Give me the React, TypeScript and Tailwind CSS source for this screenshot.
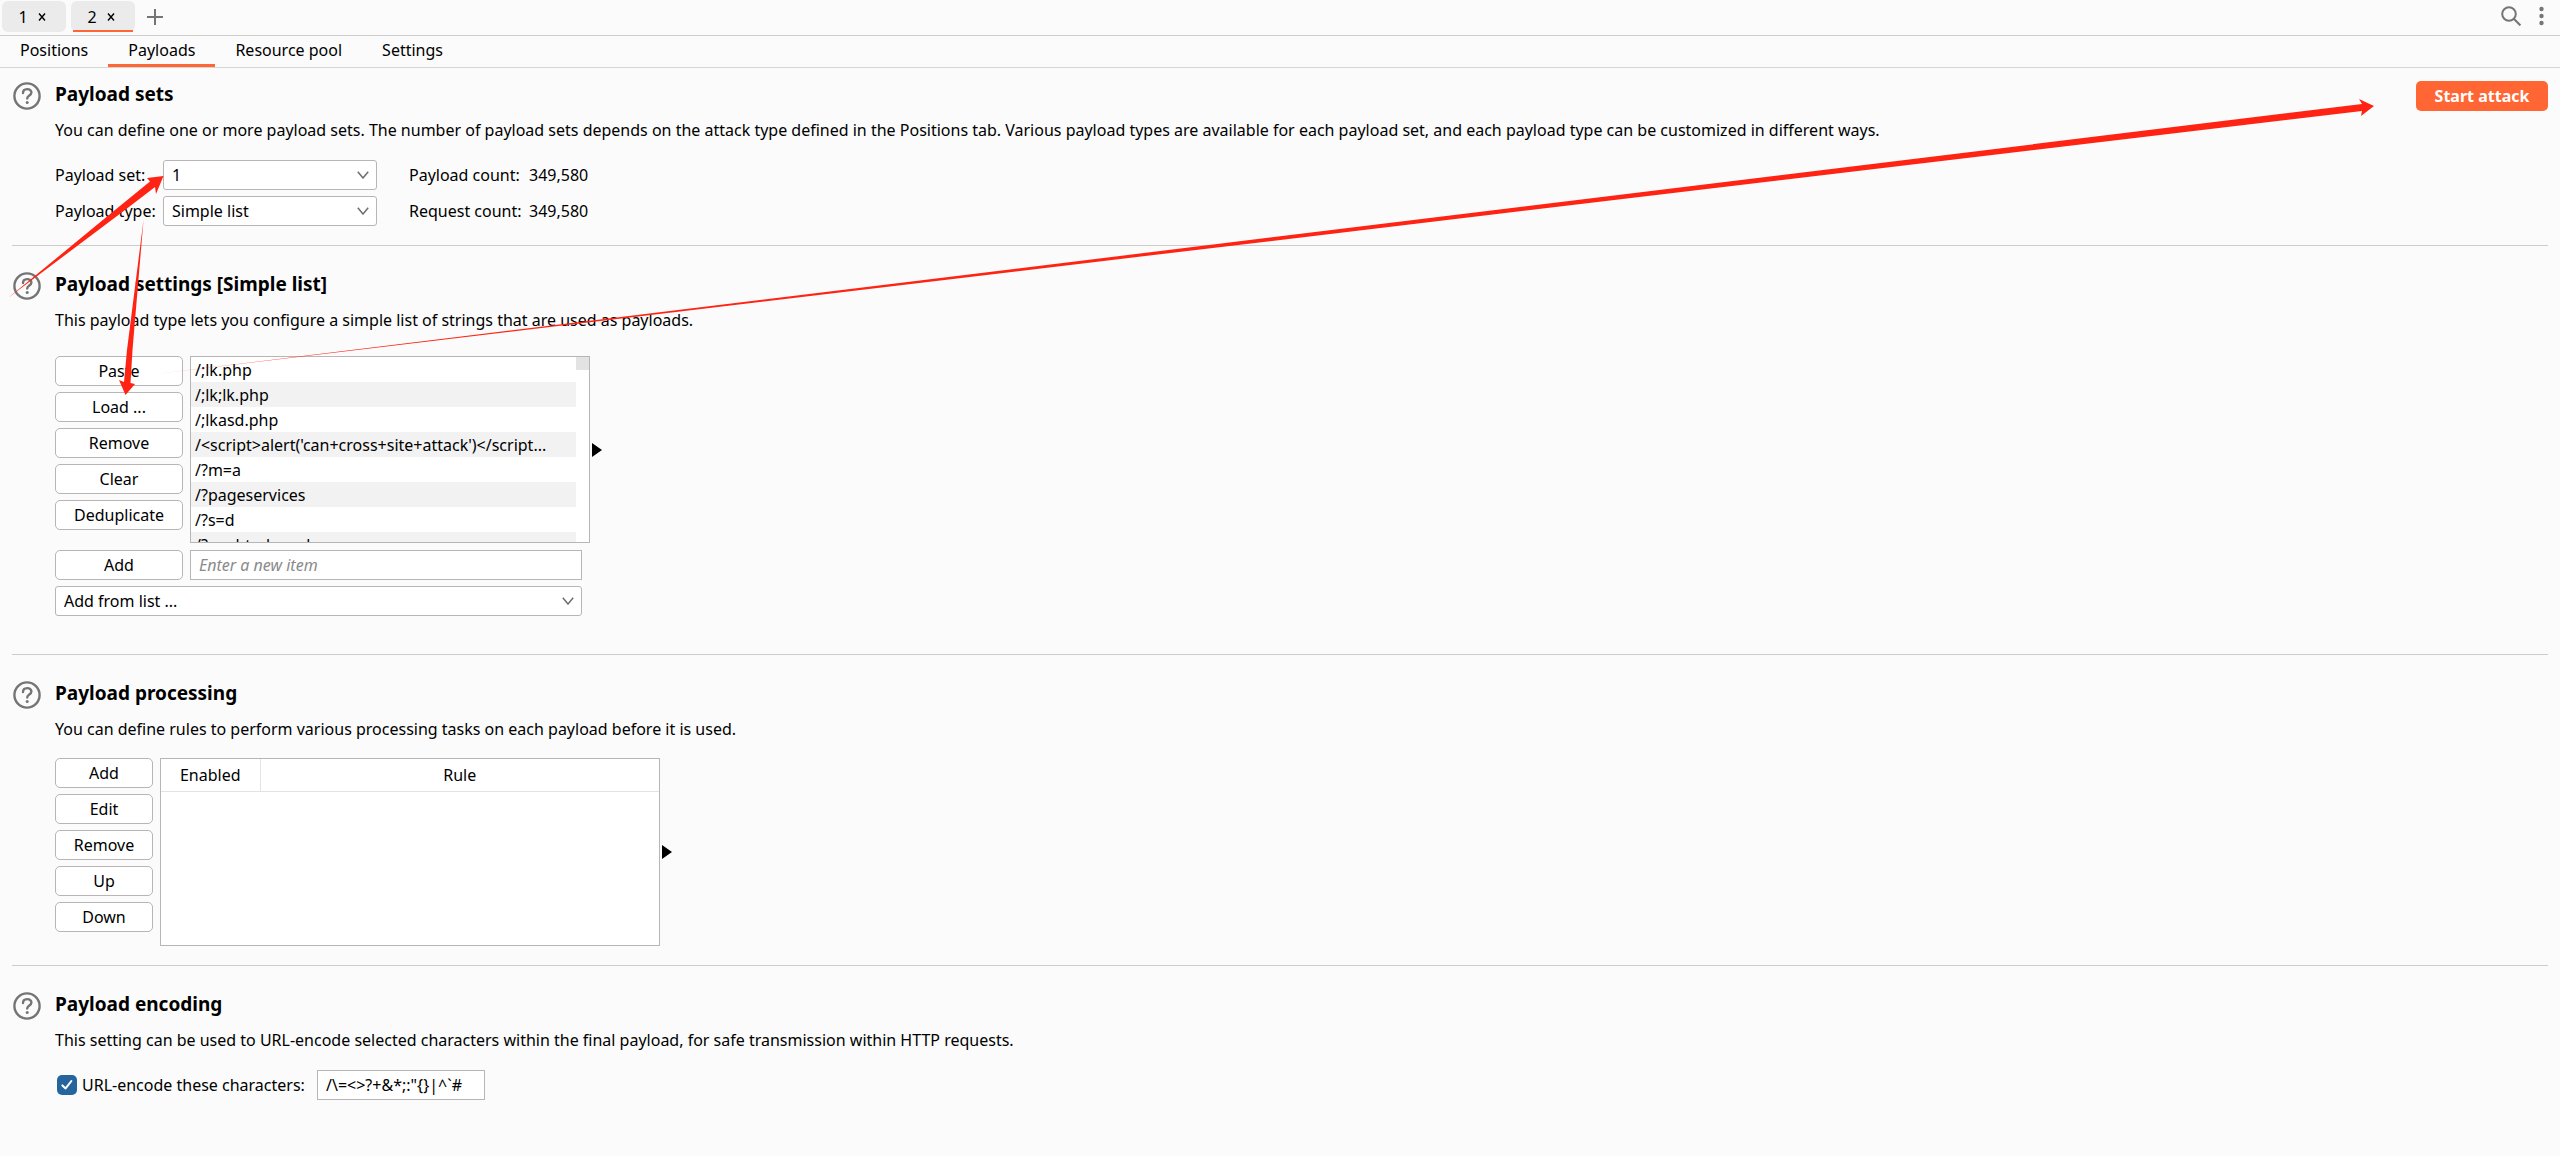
import type { ReactNode } from "react";

const tabs = ["Positions", "Payloads", "Resource pool", "Settings"];

const items = [
  "/;lk.php",
  "/;lk;lk.php",
  "/;lkasd.php",
  "/<script>alert('can+cross+site+attack')</script...",
  "/?m=a",
  "/?pageservices",
  "/?s=d",
  "/?wp-html-rend",
];

const HelpIcon = () => (
  <svg viewBox="0 0 28 28" className="mt-px h-7 w-7 shrink-0" fill="none" stroke="#757575" strokeWidth="2.4">
    <circle cx="14" cy="14" r="12.6" />
    <path d="M10 11c0-5 8.4-5 8.4-.6 0 3-4.200 3-4.200 6" strokeLinecap="round" />
    <circle cx="14.200" cy="20.400" r="1.500" fill="#757575" stroke="none" />
  </svg>
);

const Select = ({ id, label, value }: { id: string; label?: string; value: string }) => (
  <div className="relative w-full">
    <select
      id={id}
      aria-label={label}
      className="block h-[30px] w-full appearance-none rounded-[3px] border border-[#b9b5b5] bg-white px-2 leading-6"
    >
      <option>{value}</option>
    </select>
    <svg
      viewBox="0 0 12 8"
      className="pointer-events-none absolute top-[11px] right-2 h-2 w-3"
      fill="none"
      stroke="#6e6e6e"
      strokeWidth="1.500"
    >
      <path d="M.8.8 6 7 11.200.8" />
    </svg>
  </div>
);

const Button = ({ children }: { children: ReactNode }) => (
  <button className="h-[30px] w-full rounded-[5px] border border-[#b9b5b5] bg-white leading-6">{children}</button>
);

const Expand = () => (
  <button aria-label="Expand" className="self-center">
    <svg viewBox="0 0 10 14" className="h-3.5 w-2.5" fill="#000">
      <path d="M0 0 10 7 0 14z" />
    </svg>
  </button>
);

const Section = ({
  title,
  text,
  action,
  children,
}: {
  title: string;
  text: string;
  action?: ReactNode;
  children: ReactNode;
}) => (
  <section className="flex gap-3.5 pl-px">
    <HelpIcon />
    <div className="flex-1">
      <div className="flex h-[30px] items-start justify-between">
        <h2 className="text-[19px] leading-[26px] font-bold">{title}</h2>
        {action}
      </div>
      <p className="mt-1.5 leading-[26px]">{text}</p>
      {children}
    </div>
  </section>
);

// red marker arrows drawn over the panel
const Arrows = () => (
  <svg
    viewBox="0 0 2560 1156"
    className="pointer-events-none absolute top-0 left-0 h-[1156px] w-[2560px] max-w-none"
    fill="#ff2314"
  >
    <path d="M8 298 115 210 150 181.500 147 178 163.500 176 156 194 155 187 125 210z" />
    <path d="M143.500 220 127 350 124 382 119 380 125.500 395 135 384 130.500 383 132.500 350z" />
    <path d="M155 374 2362 104 2359 99 2374 106 2361 116 2362 111z" />
  </svg>
);

const App = () => {
  return (
    <div className="relative min-h-screen overflow-hidden bg-[#fbfbfb] font-['Noto_Sans',sans-serif] text-base text-black">
      <header className="flex h-9 items-start justify-between border-b border-[#ccc] pt-px pr-4 pl-0.5">
        <div className="flex items-center gap-[5px]">
          <button className="flex h-[31px] w-16 items-center justify-center gap-2.5 rounded-md bg-[#ebebeb] pr-1">
            1
            <svg viewBox="0 0 8 8" className="h-2 w-2" stroke="#000" strokeWidth="1.400">
              <path d="M1 .5 7 7.500M7 .5 1 7.500" />
            </svg>
          </button>
          <button className="relative flex h-[31px] w-16 items-center justify-center gap-2.5 rounded-md bg-[#ebebeb] pr-1">
            2
            <svg viewBox="0 0 8 8" className="h-2 w-2" stroke="#000" strokeWidth="1.400">
              <path d="M1 .5 7 7.500M7 .5 1 7.500" />
            </svg>
            <span className="absolute inset-x-0.5 bottom-0 h-0.5 bg-[#ff6633]" />
          </button>
          <button aria-label="New tab" className="ml-[7px]">
            <svg viewBox="0 0 16 16" className="h-4 w-4" stroke="#757575" strokeWidth="2">
              <path d="M8 0V16M0 8H16" />
            </svg>
          </button>
        </div>
        <div className="flex items-center gap-[18px] pt-[5px]">
          <button aria-label="Search">
            <svg viewBox="0 0 20 20" className="h-5 w-5" fill="none" stroke="#757575" strokeWidth="2">
              <circle cx="8" cy="8" r="6.800" />
              <path d="M12.800 12.800 19.400 19.400" />
            </svg>
          </button>
          <button aria-label="Menu">
            <svg viewBox="0 0 5 20" className="h-5 w-[5px]" fill="#757575">
              <circle cx="2.500" cy="3" r="2.200" />
              <circle cx="2.500" cy="10" r="2.200" />
              <circle cx="2.500" cy="17" r="2.200" />
            </svg>
          </button>
        </div>
      </header>
      <nav className="flex h-8 border-b border-[#d5d5d5]">
        {tabs.map((tab) => (
          <button
            key={tab}
            className={
              tab === "Payloads"
                ? "border-b-3 border-[#ff6633] px-5"
                : "border-b-3 border-transparent px-5"
            }
          >
            {tab}
          </button>
        ))}
      </nav>

      <main className="flex flex-col px-3">
        <div className="pt-[13px] pb-[19px]">
          <Section
            title="Payload sets"
            text="You can define one or more payload sets. The number of payload sets depends on the attack type defined in the Positions tab. Various payload types are available for each payload set, and each payload type can be customized in different ways."
            action={
              <button className="h-[30px] w-[132px] rounded-[5px] bg-[#ff6633] text-base leading-6 font-bold text-white">
                Start attack
              </button>
            }
          >
            <div className="mt-[17px] grid grid-cols-[108px_214px_120px_auto] items-center justify-start gap-y-1.5">
              <label htmlFor="payload-set">Payload set:</label>
              <Select id="payload-set" value="1" />
              <span className="pl-8 whitespace-nowrap">Payload count:</span>
              <span className="pl-8">349,580</span>
              <label htmlFor="payload-type">Payload type:</label>
              <Select id="payload-type" value="Simple list" />
              <span className="pl-8 whitespace-nowrap">Request count:</span>
              <span className="pl-8">349,580</span>
            </div>
          </Section>
        </div>

        <div className="border-t border-[#ccc] pt-[25px] pb-[38px]">
          <Section
            title="Payload settings [Simple list]"
            text="This payload type lets you configure a simple list of strings that are used as payloads."
          >
            <div className="mt-[23px] flex">
              <div className="mr-[7px] flex w-32 flex-col gap-1.5">
                <Button>Paste</Button>
                <Button>Load ...</Button>
                <Button>Remove</Button>
                <Button>Clear</Button>
                <Button>Deduplicate</Button>
              </div>
              <div className="mr-0.5 flex h-[187px] w-[400px] overflow-hidden border border-[#b9b5b5] bg-white">
                <ul className="w-[385px]">
                  {items.map((item) => (
                    <li key={item} className="h-[25px] pl-1 leading-[26px] whitespace-nowrap even:bg-[#f2f2f2]">
                      {item}
                    </li>
                  ))}
                </ul>
                <div className="h-[13px] flex-1 bg-[#e3e3e3]" />
              </div>
              <Expand />
            </div>
            <div className="mt-[7px] flex w-[527px] gap-[7px]">
              <div className="w-32 shrink-0">
                <Button>Add</Button>
              </div>
              <input
                type="text"
                aria-label="New item"
                placeholder="Enter a new item"
                className="h-[30px] min-w-0 flex-1 border border-[#b9b5b5] bg-white px-2 placeholder:text-[#8a8a8a] placeholder:italic"
              />
            </div>
            <div className="mt-1.5 w-[527px]">
              <Select id="add-from-list" label="Add from list" value="Add from list ..." />
            </div>
          </Section>
        </div>

        <div className="border-t border-[#ccc] pt-[25px] pb-[19px]">
          <Section
            title="Payload processing"
            text="You can define rules to perform various processing tasks on each payload before it is used."
          >
            <div className="mt-4 flex">
              <div className="mr-[7px] flex w-[98px] flex-col gap-1.5">
                <Button>Add</Button>
                <Button>Edit</Button>
                <Button>Remove</Button>
                <Button>Up</Button>
                <Button>Down</Button>
              </div>
              <div className="mr-0.5 h-[188px] w-[500px] border border-[#b9b5b5] bg-white">
                <table className="w-full table-fixed">
                  <thead>
                    <tr className="h-8 border-b border-[#e3e3e3]">
                      <th className="w-[99px] border-r border-[#e3e3e3] font-normal">Enabled</th>
                      <th className="font-normal">Rule</th>
                    </tr>
                  </thead>
                  <tbody />
                </table>
              </div>
              <Expand />
            </div>
          </Section>
        </div>

        <div className="border-t border-[#ccc] pt-[25px]">
          <Section
            title="Payload encoding"
            text="This setting can be used to URL-encode selected characters within the final payload, for safe transmission within HTTP requests."
          >
            <div className="mt-[17px] flex items-center">
              <div className="relative ml-0.5 h-5 w-5">
                <input
                  id="url-encode"
                  type="checkbox"
                  defaultChecked
                  className="block h-5 w-5 appearance-none rounded-[5px] bg-[#26649e]"
                />
                <svg
                  viewBox="0 0 20 20"
                  className="pointer-events-none absolute inset-0 h-5 w-5"
                  fill="none"
                  stroke="#fff"
                  strokeWidth="2"
                  strokeLinecap="round"
                  strokeLinejoin="round"
                >
                  <path d="M5.400 10.400 8.600 13.400 14.400 6" />
                </svg>
              </div>
              <label htmlFor="url-encode" className="ml-[5px] w-[235px]">
                URL-encode these characters:
              </label>
              <input
                type="text"
                aria-label="Characters to encode"
                defaultValue={'/\\=<>?+&*;:"{}|^`#'}
                className="h-[30px] w-[168px] border border-[#b9b5b5] bg-white px-2"
              />
            </div>
          </Section>
        </div>
      </main>
      <Arrows />
    </div>
  );
};

export default App;
